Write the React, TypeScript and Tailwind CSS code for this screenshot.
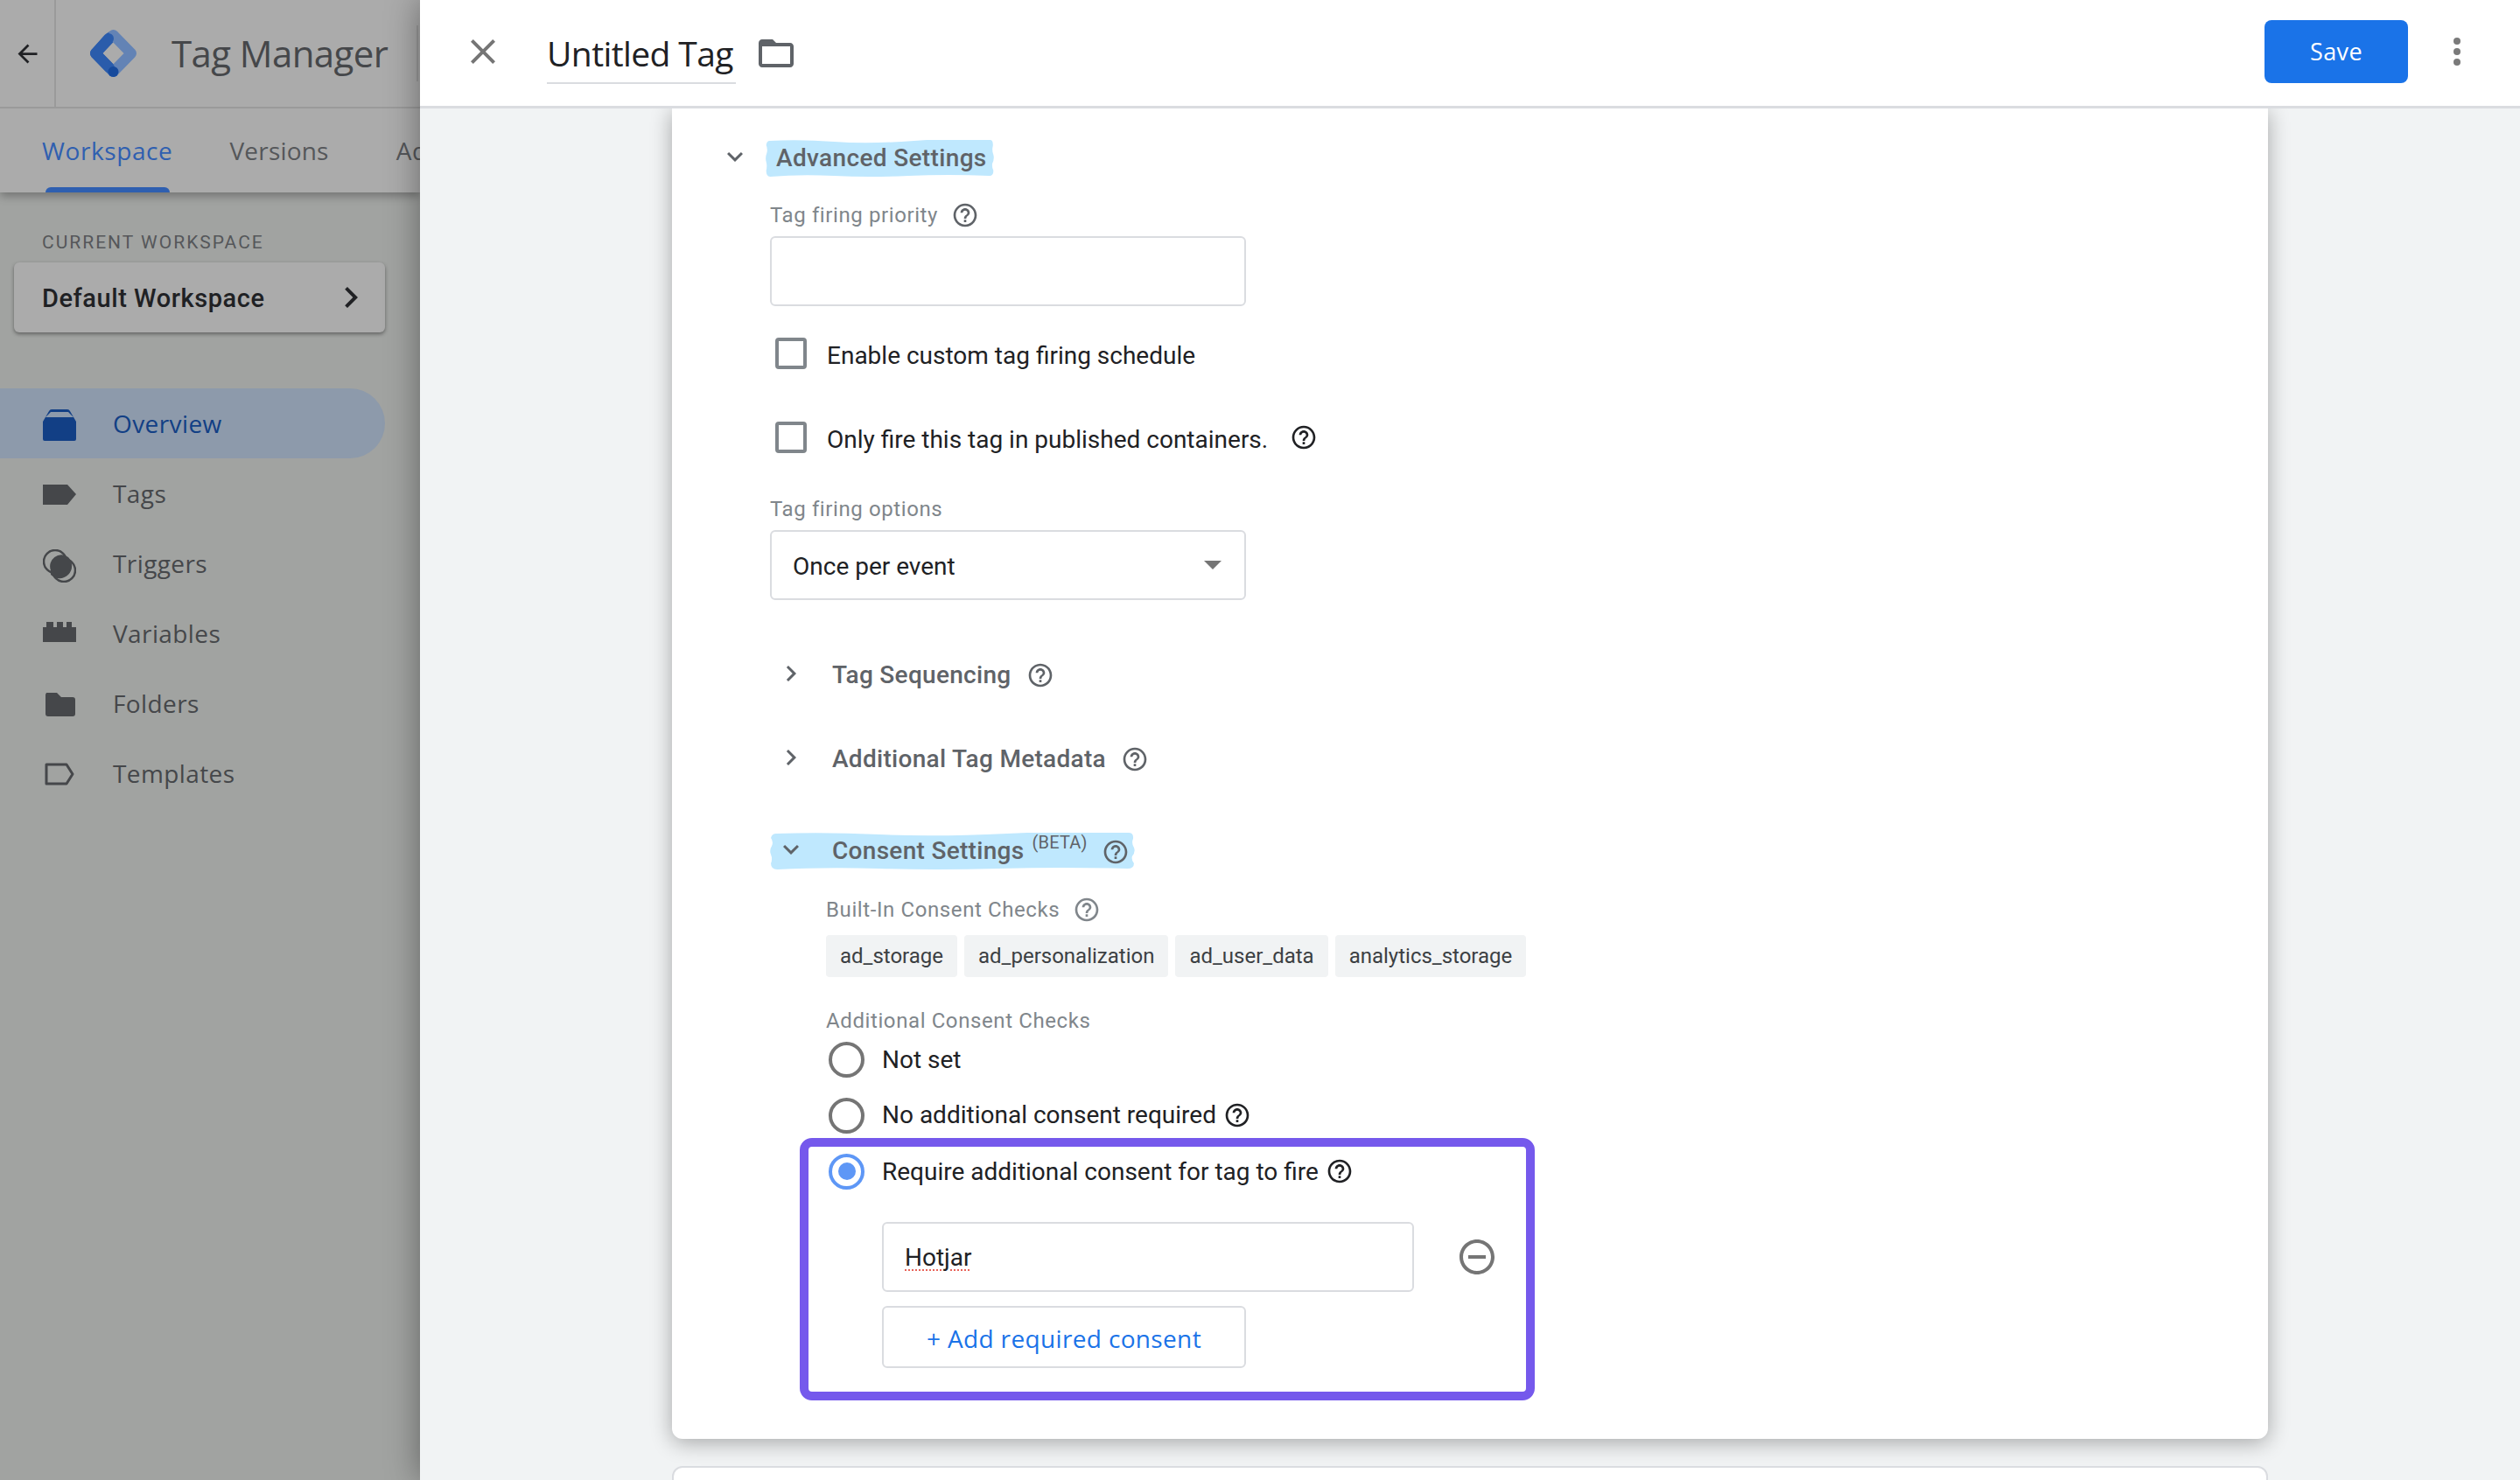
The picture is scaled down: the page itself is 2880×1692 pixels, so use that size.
import type { ReactNode } from 'react'

const HELP =
  'M11 18h2v-2h-2v2zm1-16C6.48 2 2 6.48 2 12s4.48 10 10 10 10-4.48 10-10S17.52 2 12 2zm0 18c-4.41 0-8-3.59-8-8s3.59-8 8-8 8 3.59 8 8-3.59 8-8 8zm0-14c-2.21 0-4 1.79-4 4h2c0-1.1.9-2 2-2s2 .9 2 2c0 2-3 1.75-3 5h2c0-2.25 3-2.5 3-5 0-2.21-1.79-4-4-4z'
const CLOSE =
  'M19 6.41L17.59 5 12 10.59 6.41 5 5 6.41 10.59 12 5 17.59 6.41 19 12 13.41 17.59 19 19 17.59 13.41 12z'
const BACK = 'M20 11H7.83l5.59-5.59L12 4l-8 8 8 8 1.41-1.41L7.83 13H20v-2z'
const EXPAND = 'M16.59 8.59L12 13.17 7.41 8.59 6 10l6 6 6-6z'
const CHEVRON = 'M10 6L8.59 7.41 13.17 12l-4.58 4.59L10 18l6-6z'
const FOLDER =
  'M20 6h-8l-2-2H4c-1.1 0-1.99.9-1.99 2L2 18c0 1.1.9 2 2 2h16c1.1 0 2-.9 2-2V8c0-1.1-.9-2-2-2zm0 12H4V8h16v10z'
const REMOVE =
  'M7 11v2h10v-2H7zm5-9C6.48 2 2 6.48 2 12s4.48 10 10 10 10-4.48 10-10S17.52 2 12 2zm0 18c-4.41 0-8-3.59-8-8s3.59-8 8-8 8 3.59 8 8-3.59 8-8 8z'

function Icon({ d, className }: { d: string; className: string }) {
  return (
    <svg viewBox="0 0 24 24" className={`shrink-0 fill-current ${className}`}>
      <path d={d} />
    </svg>
  )
}

function Help({ className = 'text-[#5f6368]' }: { className?: string }) {
  return <Icon d={HELP} className={`h-8 w-8 ${className}`} />
}

// hand-drawn highlighter stroke behind a heading
function Marker({ children, className }: { children: ReactNode; className: string }) {
  return (
    <div className={`relative flex items-center ${className}`}>
      <svg
        viewBox="0 0 400 42"
        preserveAspectRatio="none"
        className="absolute inset-0 h-full w-full fill-[#bfe8fe]"
      >
        <path d="M7 1 Q60 -1 120 2 T260 1 T393 0 Q399 0 398 7 Q396 12 399 17 Q401 22 397 27 Q396 31 399 35 Q399 41 392 41 Q320 39 250 41 T120 41 T8 42 Q1 42 1 35 Q3 30 1 25 Q-1 20 2 15 Q4 10 1 6 Q2 1 7 1 Z" />
      </svg>
      <div className="relative flex items-center">{children}</div>
    </div>
  )
}

function FieldLabel({ children, className = '' }: { children: ReactNode; className?: string }) {
  return (
    <div className={`flex h-[26px] items-center text-[24px] tracking-[0.6px] text-[#80868b] ${className}`}>
      {children}
    </div>
  )
}

function CheckRow({ children, className = '' }: { children: ReactNode; className?: string }) {
  return (
    <div className={`flex h-10 items-center pl-[6px] text-[28px] text-[#202124] ${className}`}>
      <span className="mr-[23px] h-9 w-9 rounded-[4px] border-4 border-[#80868b]" />
      {children}
    </div>
  )
}

function Radio({ on = false }: { on?: boolean }) {
  return on ? (
    <span className="mr-5 flex h-[41px] w-[41px] shrink-0 items-center justify-center rounded-full border-4 border-[#5e97f6]">
      <span className="h-5 w-5 rounded-full bg-[#5e97f6]" />
    </span>
  ) : (
    <span className="mr-5 h-[41px] w-[41px] shrink-0 rounded-full border-4 border-[#757575]" />
  )
}

function Collapsed({ title, className }: { title: string; className: string }) {
  return (
    <div className={`flex h-10 items-center pl-[6px] text-[#5f6368] ${className}`}>
      <Icon d={CHEVRON} className="-mt-1 h-9 w-9" />
      <span className="ml-[29px] mr-[17px] text-[28px] font-medium tracking-[0.3px]">{title}</span>
      <Help />
    </div>
  )
}

const NAV = [
  { label: 'Overview', active: true, icon: <path d="M0 14 L0 34 Q0 36 2 36 L36 36 Q38 36 38 34 L38 14 L31 2 Q30 0 28 0 L10 0 Q8 0 7 2 Z M3 9 L9 3 L29 3 L35 9 Z" fillRule="evenodd" /> },
  { label: 'Tags', active: false, icon: <path d="M0 6 L28 6 L38 17 L28 29 L0 29 Z" /> },
  {
    label: 'Triggers',
    active: false,
    icon: (
      <>
        <circle cx="14" cy="14" r="13" fill="none" stroke="currentColor" strokeWidth="2.5" />
        <circle cx="24" cy="24" r="13" fill="none" stroke="currentColor" strokeWidth="2.5" />
        <path d="M9 24 A13 13 0 0 1 29 9 A13 13 0 0 1 9 29 Z" />
      </>
    ),
  },
  { label: 'Variables', active: false, icon: <path d="M0 9 L4 9 L4 3 L12 3 L12 9 L16 9 L16 3 L23 3 L23 9 L27 9 L27 3 L33 3 L33 9 L38 9 L38 26 L0 26 Z" /> },
  { label: 'Folders', active: false, icon: <path d="M3 0 L15 0 L20 5 L33 5 Q36 5 36 8 L36 24 Q36 27 33 27 L5 27 Q2 27 2 24 L2 2 Z" transform="translate(1 4)" /> },
  {
    label: 'Templates',
    active: false,
    icon: <path d="M4 6 L27 6 L34 17 L27 28 L4 28 Z" fill="none" stroke="currentColor" strokeWidth="3" strokeLinejoin="round" />,
  },
]

function Sidebar() {
  return (
    <aside className="flex w-[480px] shrink-0 flex-col overflow-hidden bg-[#a1a3a1] font-['Roboto',sans-serif]">
      <div className="flex h-[220px] w-[480px] flex-col bg-[#ababab] shadow-[0_4px_10px_rgba(0,0,0,0.3)]">
        <div className="flex h-[124px] items-center border-b-2 border-[#9a9a9a]">
          <div className="flex h-full w-[64px] items-center justify-center border-r-2 border-[#9a9a9a]">
            <Icon d={BACK} className="h-[33px] w-[33px] text-[#202124]" />
          </div>
          <svg viewBox="0 0 59 58" className="ml-9 h-[58px] w-[59px] shrink-0" fill="none" strokeLinecap="round" strokeLinejoin="round" strokeWidth="12">
            <path d="M27 10 L9 29 L29.5 50" stroke="#2a5cab" />
            <path d="M29.5 8 L50 29 L29.5 50" stroke="#6383b5" />
            <path d="M24 12 L9 29 L25 45.5" stroke="#2a5cab" />
            <circle cx="29.5" cy="50" r="6" fill="#164a9c" />
          </svg>
          <span className="ml-[37px] whitespace-nowrap font-['Open_Sans',sans-serif] text-[42px] leading-none tracking-[-0.6px] text-[#45474a]">
            Tag Manager
          </span>
          <span className="ml-[33px] h-16 w-[2px] shrink-0 bg-[#9a9a9a]" />
        </div>
        <div className="relative flex flex-1 pl-12 pt-[30px] font-['Open_Sans',sans-serif] text-[28px] leading-[36px] tracking-[0.6px]">
          <span className="text-[#2f5fb0]">Workspace</span>
          <span className="ml-[65px] tracking-[0.2px] text-[#55575a]">Versions</span>
          <span className="ml-[77px] text-[#55575a]">Admin</span>
          <span className="absolute bottom-0 left-[52px] h-[6px] w-[142px] rounded-t-[6px] bg-[#2f5fb0]" />
        </div>
      </div>
      <div className="mt-[45px] pl-12 text-[21px] leading-6 tracking-[2px] text-[#55575a]">
        CURRENT WORKSPACE
      </div>
      <div className="ml-4 mt-[11px] flex h-20 w-[424px] items-center justify-between rounded-[6px] bg-[#ababab] pl-8 pr-[15px] text-[29px] font-medium tracking-[0.55px] text-[#202124] shadow-[0_2px_4px_rgba(0,0,0,0.4)]">
        <span className="pt-[3px]">Default Workspace</span>
        <Icon d={CHEVRON} className="h-12 w-12" />
      </div>
      <nav className="mt-16 flex flex-col font-['Open_Sans',sans-serif] text-[28px] tracking-[0.4px]">
        {NAV.map((item) => (
          <div
            key={item.label}
            className={
              item.active
                ? 'flex h-20 w-[440px] items-center rounded-r-[40px] bg-[#8d9aab] pl-[49px] text-[#123f85]'
                : 'flex h-20 w-[440px] items-center pl-[49px] text-[#45474a]'
            }
          >
            <svg viewBox="0 0 38 38" className="mt-[5px] h-[38px] w-[38px] shrink-0 fill-current">
              {item.icon}
            </svg>
            <span className="ml-[42px]">{item.label}</span>
          </div>
        ))}
      </nav>
    </aside>
  )
}

function Header() {
  return (
    <header className="relative z-10 flex h-[124px] shrink-0 items-center border-b-[3px] border-[#dadce0] bg-white pb-[3px] pr-[68px] pl-[48px] font-['Roboto',sans-serif]">
      <Icon d={CLOSE} className="h-12 w-12 text-[#757575]" />
      <div className="ml-[49px] flex h-[72px] w-[216px] translate-y-[1px] items-center border-b-[2px] border-[#dadce0] pt-1 font-['Open_Sans',sans-serif] text-[39px] tracking-[-0.6px] text-[#202124]">
        Untitled Tag
      </div>
      <Icon d={FOLDER} className="ml-[22px] mt-[3px] h-12 w-12 text-[#5f6368]" />
      <button
        type="button"
        className="ml-auto h-[72px] w-[164px] rounded-[8px] bg-[#1a73e8] font-['Open_Sans',sans-serif] text-[27px] tracking-[0.4px] text-white"
      >
        Save
      </button>
      <div className="ml-[52px] flex flex-col gap-1">
        <span className="h-2 w-2 rounded-full bg-[#7a7a7a]" />
        <span className="h-2 w-2 rounded-full bg-[#7a7a7a]" />
        <span className="h-2 w-2 rounded-full bg-[#7a7a7a]" />
      </div>
    </header>
  )
}

function Card() {
  return (
    <section className="h-[1521px] w-[1824px] shrink-0 rounded-b-[12px] bg-white pl-[112px] pt-9 shadow-[0_4px_24px_rgba(0,0,0,0.32)]">
      <div className="-ml-[58px] flex h-[42px] items-center text-[#5f6368]">
        <Icon d={EXPAND} className="-mt-1 h-9 w-9" />
        <Marker className="ml-[17px] h-[42px] w-[261px] pl-3">
          <span className="whitespace-nowrap text-[28px] font-medium tracking-[0.35px]">Advanced Settings</span>
        </Marker>
      </div>

      <FieldLabel className="mt-[31px]">
        Tag firing priority
        <Help className="ml-[15px] text-[#5f6368]" />
      </FieldLabel>
      <div className="mt-[11px] h-20 w-[544px] rounded-[6px] border-2 border-[#dadce0]" />

      <CheckRow className="mt-[34px]">
        <span className="pt-[5px]">Enable custom tag firing schedule</span>
      </CheckRow>
      <CheckRow className="mt-14">
        <span className="pt-[5px]">Only fire this tag in published containers.</span>
        <Help className="ml-[25px] text-[#202124]" />
      </CheckRow>

      <FieldLabel className="mt-[49px]">Tag firing options</FieldLabel>
      <div className="mt-[11px] flex h-20 w-[544px] items-center justify-between rounded-[6px] border-2 border-[#dadce0] pl-6 pr-[26px] text-[28px] text-[#202124]">
        <span className="pt-[3px]">Once per event</span>
        <span className="h-0 w-0 border-x-[10px] border-t-[10px] border-x-transparent border-t-[#757575]" />
      </div>

      <Collapsed title="Tag Sequencing" className="mt-[66px]" />
      <Collapsed title="Additional Tag Metadata" className="mt-14" />

      <Marker className="mt-16 h-[42px] w-[417px] pl-[6px] text-[#5f6368]">
        <Icon d={EXPAND} className="-mt-1 h-9 w-9" />
        <span className="ml-[29px] whitespace-nowrap text-[28px] font-medium tracking-[0.3px]">Consent Settings</span>
        <span className="mb-5 ml-[9px] whitespace-nowrap text-[20px] tracking-[0.2px]">(BETA)</span>
        <Help className="ml-4 mt-[2px]" />
      </Marker>

      <FieldLabel className="ml-16 mt-[33px]">
        Built-In Consent Checks
        <Help className="ml-[15px]" />
      </FieldLabel>
      <div className="ml-16 mt-4 flex gap-2 text-[24px] text-[#3c4043]">
        {['ad_storage', 'ad_personalization', 'ad_user_data', 'analytics_storage'].map((chip) => (
          <span key={chip} className="flex h-12 items-center rounded-[4px] bg-[#f1f3f4] px-4">
            {chip}
          </span>
        ))}
      </div>

      <FieldLabel className="ml-16 mt-9 pt-[2px]">Additional Consent Checks</FieldLabel>
      <div className="ml-[67px] mt-3 flex h-10 items-center text-[28px] text-[#202124]">
        <Radio />
        <span className="pt-[2px]">Not set</span>
      </div>
      <div className="ml-[67px] mt-6 flex h-10 items-center text-[28px] text-[#202124]">
        <Radio />
        No additional consent required
        <Help className="ml-2 text-[#202124]" />
      </div>

      <div className="ml-[34px] mt-[6px] h-[300px] w-[840px] rounded-[14px] border-[10px] border-[#7559ec] pl-[23px] pt-2">
        <div className="flex h-10 items-center text-[28px] text-[#202124]">
          <Radio on />
          <span className="pt-[2px]">Require additional consent for tag to fire</span>
          <Help className="ml-2 text-[#202124]" />
        </div>
        <div className="ml-[61px] mt-[38px] flex items-center">
          <div className="flex h-20 w-[608px] items-center rounded-[6px] border-2 border-[#dadce0] pl-6 text-[28px] text-[#202124]">
            <span className="pt-[2px] underline decoration-[#e8645a] decoration-dotted decoration-2 underline-offset-4">Hotjar</span>
          </div>
          <Icon d={REMOVE} className="ml-12 h-12 w-12 text-[#757575]" />
        </div>
        <button
          type="button"
          className="ml-[61px] mt-4 h-[71px] w-[416px] rounded-[6px] border-2 border-[#dadce0] pt-[2px] font-['Open_Sans',sans-serif] text-[28px] font-medium tracking-[0.35px] text-[#1a73e8]"
        >
          + Add required consent
        </button>
      </div>
    </section>
  )
}

export default function App() {
  return (
    <div className="flex h-[1692px] w-[2880px] overflow-hidden font-['Roboto',sans-serif]">
      <Sidebar />
      <main className="relative z-10 flex w-[2400px] flex-col bg-[#f1f3f4] shadow-[0_0_36px_rgba(0,0,0,0.4)]">
        <Header />
        <div className="flex flex-col overflow-hidden pb-8 pl-[288px]">
          <Card />
          <div className="mt-[31px] h-20 w-[1824px] shrink-0 rounded-t-[12px] border-2 border-[#dadce0] bg-white" />
        </div>
      </main>
    </div>
  )
}
